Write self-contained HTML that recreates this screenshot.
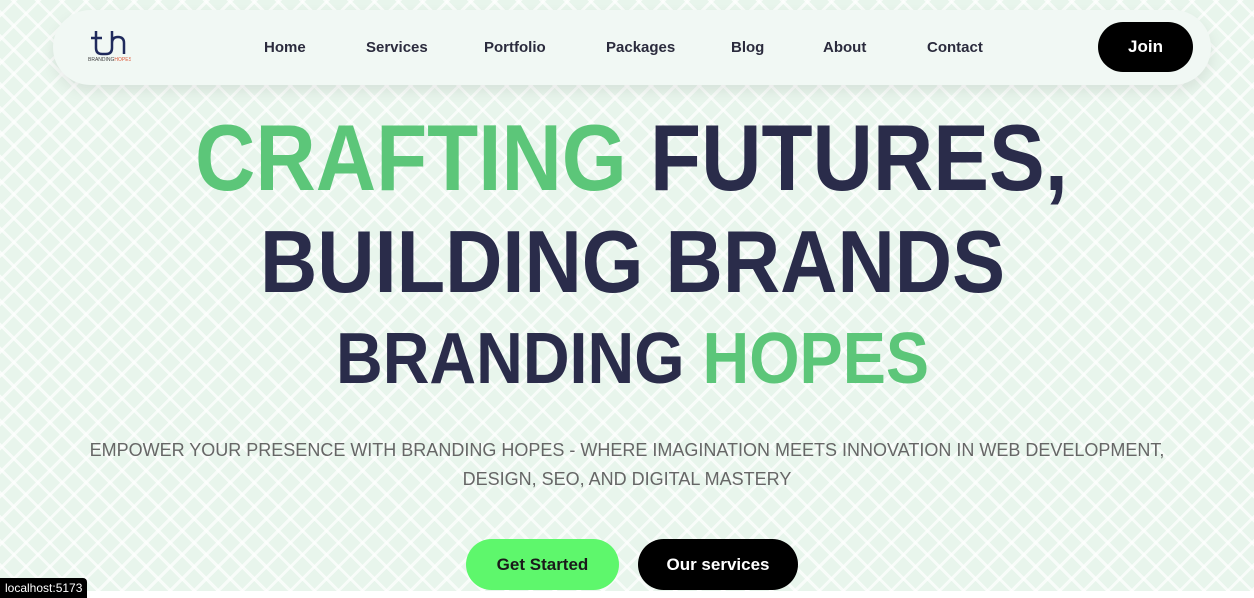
<!DOCTYPE html>
<html><head><style>
body{margin:0;width:1254px;height:598px;overflow:hidden;font-family:"Liberation Sans",sans-serif;background:#fff;position:relative}
.bg{position:absolute;left:0;top:0;width:1254px;height:591px;background-color:#e8f5ec;
background-image:repeating-linear-gradient(45deg,rgba(255,255,255,.7) 0 3px,transparent 3px 17px),repeating-linear-gradient(-45deg,rgba(255,255,255,.7) 0 3px,transparent 3px 17px);}
.nav{position:absolute;left:53px;top:10px;width:1158px;height:75px;background:#f1f8f4;border-radius:38px;box-shadow:0 6px 14px rgba(0,0,0,.08)}
.nav a{position:absolute;top:29px;font-size:15px;font-weight:bold;color:#2b2b3d;text-decoration:none}
.join{position:absolute;left:1045px;top:12px;width:95px;height:50px;background:#000;color:#fff;border-radius:25px;font-weight:bold;font-size:17px;text-align:center;line-height:50px}
.sub{position:absolute;left:0;width:1254px;top:436px;text-align:center;color:#666;font-size:18px;line-height:29px}
.btn{position:absolute;top:539px;height:51px;border-radius:26px;font-weight:bold;font-size:17px;text-align:center;line-height:51px}
.tag{position:absolute;left:0;top:578px;background:#000;color:#fff;font-size:12px;padding:3px 5px;border-radius:0 4px 0 0}
</style></head><body>
<div class="bg"></div>
<div class="nav">
<svg style="position:absolute;left:34px;top:18px" width="44" height="36" viewBox="0 0 44 36">
<path d="M9 3 V20 Q9 26 15 26 H19 Q25 26 25 20 V3 M25 15 Q25 9 31 9 Q37 9 37 15 V26 M4 10 H15" fill="none" stroke="#1f2a5c" stroke-width="2.5"/>
<text x="1" y="33" font-size="5" fill="#444" font-family="Liberation Sans">BRANDING<tspan fill="#e05a3a">HOPES</tspan></text>
</svg>
<a style="left:211px">Home</a><a style="left:313px">Services</a><a style="left:431px">Portfolio</a><a style="left:553px">Packages</a><a style="left:678px">Blog</a><a style="left:770px">About</a><a style="left:874px">Contact</a>
<div class="join">Join</div>
</div>
<svg style="position:absolute;left:0;top:0" width="1254" height="400">
<g font-family="Liberation Sans" font-weight="bold" fill="#2a2c4a">
<text x="195" y="190" font-size="94" textLength="873" lengthAdjust="spacingAndGlyphs"><tspan fill="#5cc679">CRAFTING</tspan> FUTURES,</text>
<text x="260" y="292" font-size="88" textLength="745" lengthAdjust="spacingAndGlyphs">BUILDING BRANDS</text>
<text x="336" y="383" font-size="72" textLength="593" lengthAdjust="spacingAndGlyphs">BRANDING <tspan fill="#5cc679">HOPES</tspan></text>
</g></svg>
<div class="sub">EMPOWER YOUR PRESENCE WITH BRANDING HOPES - WHERE IMAGINATION MEETS INNOVATION IN WEB DEVELOPMENT,<br>DESIGN, SEO, AND DIGITAL MASTERY</div>
<div class="btn" style="left:466px;width:153px;background:#5ef76c;color:#1a1a1a">Get Started</div>
<div class="btn" style="left:638px;width:160px;background:#000;color:#fff">Our services</div>
<div class="tag">localhost:5173</div>
</body></html>
